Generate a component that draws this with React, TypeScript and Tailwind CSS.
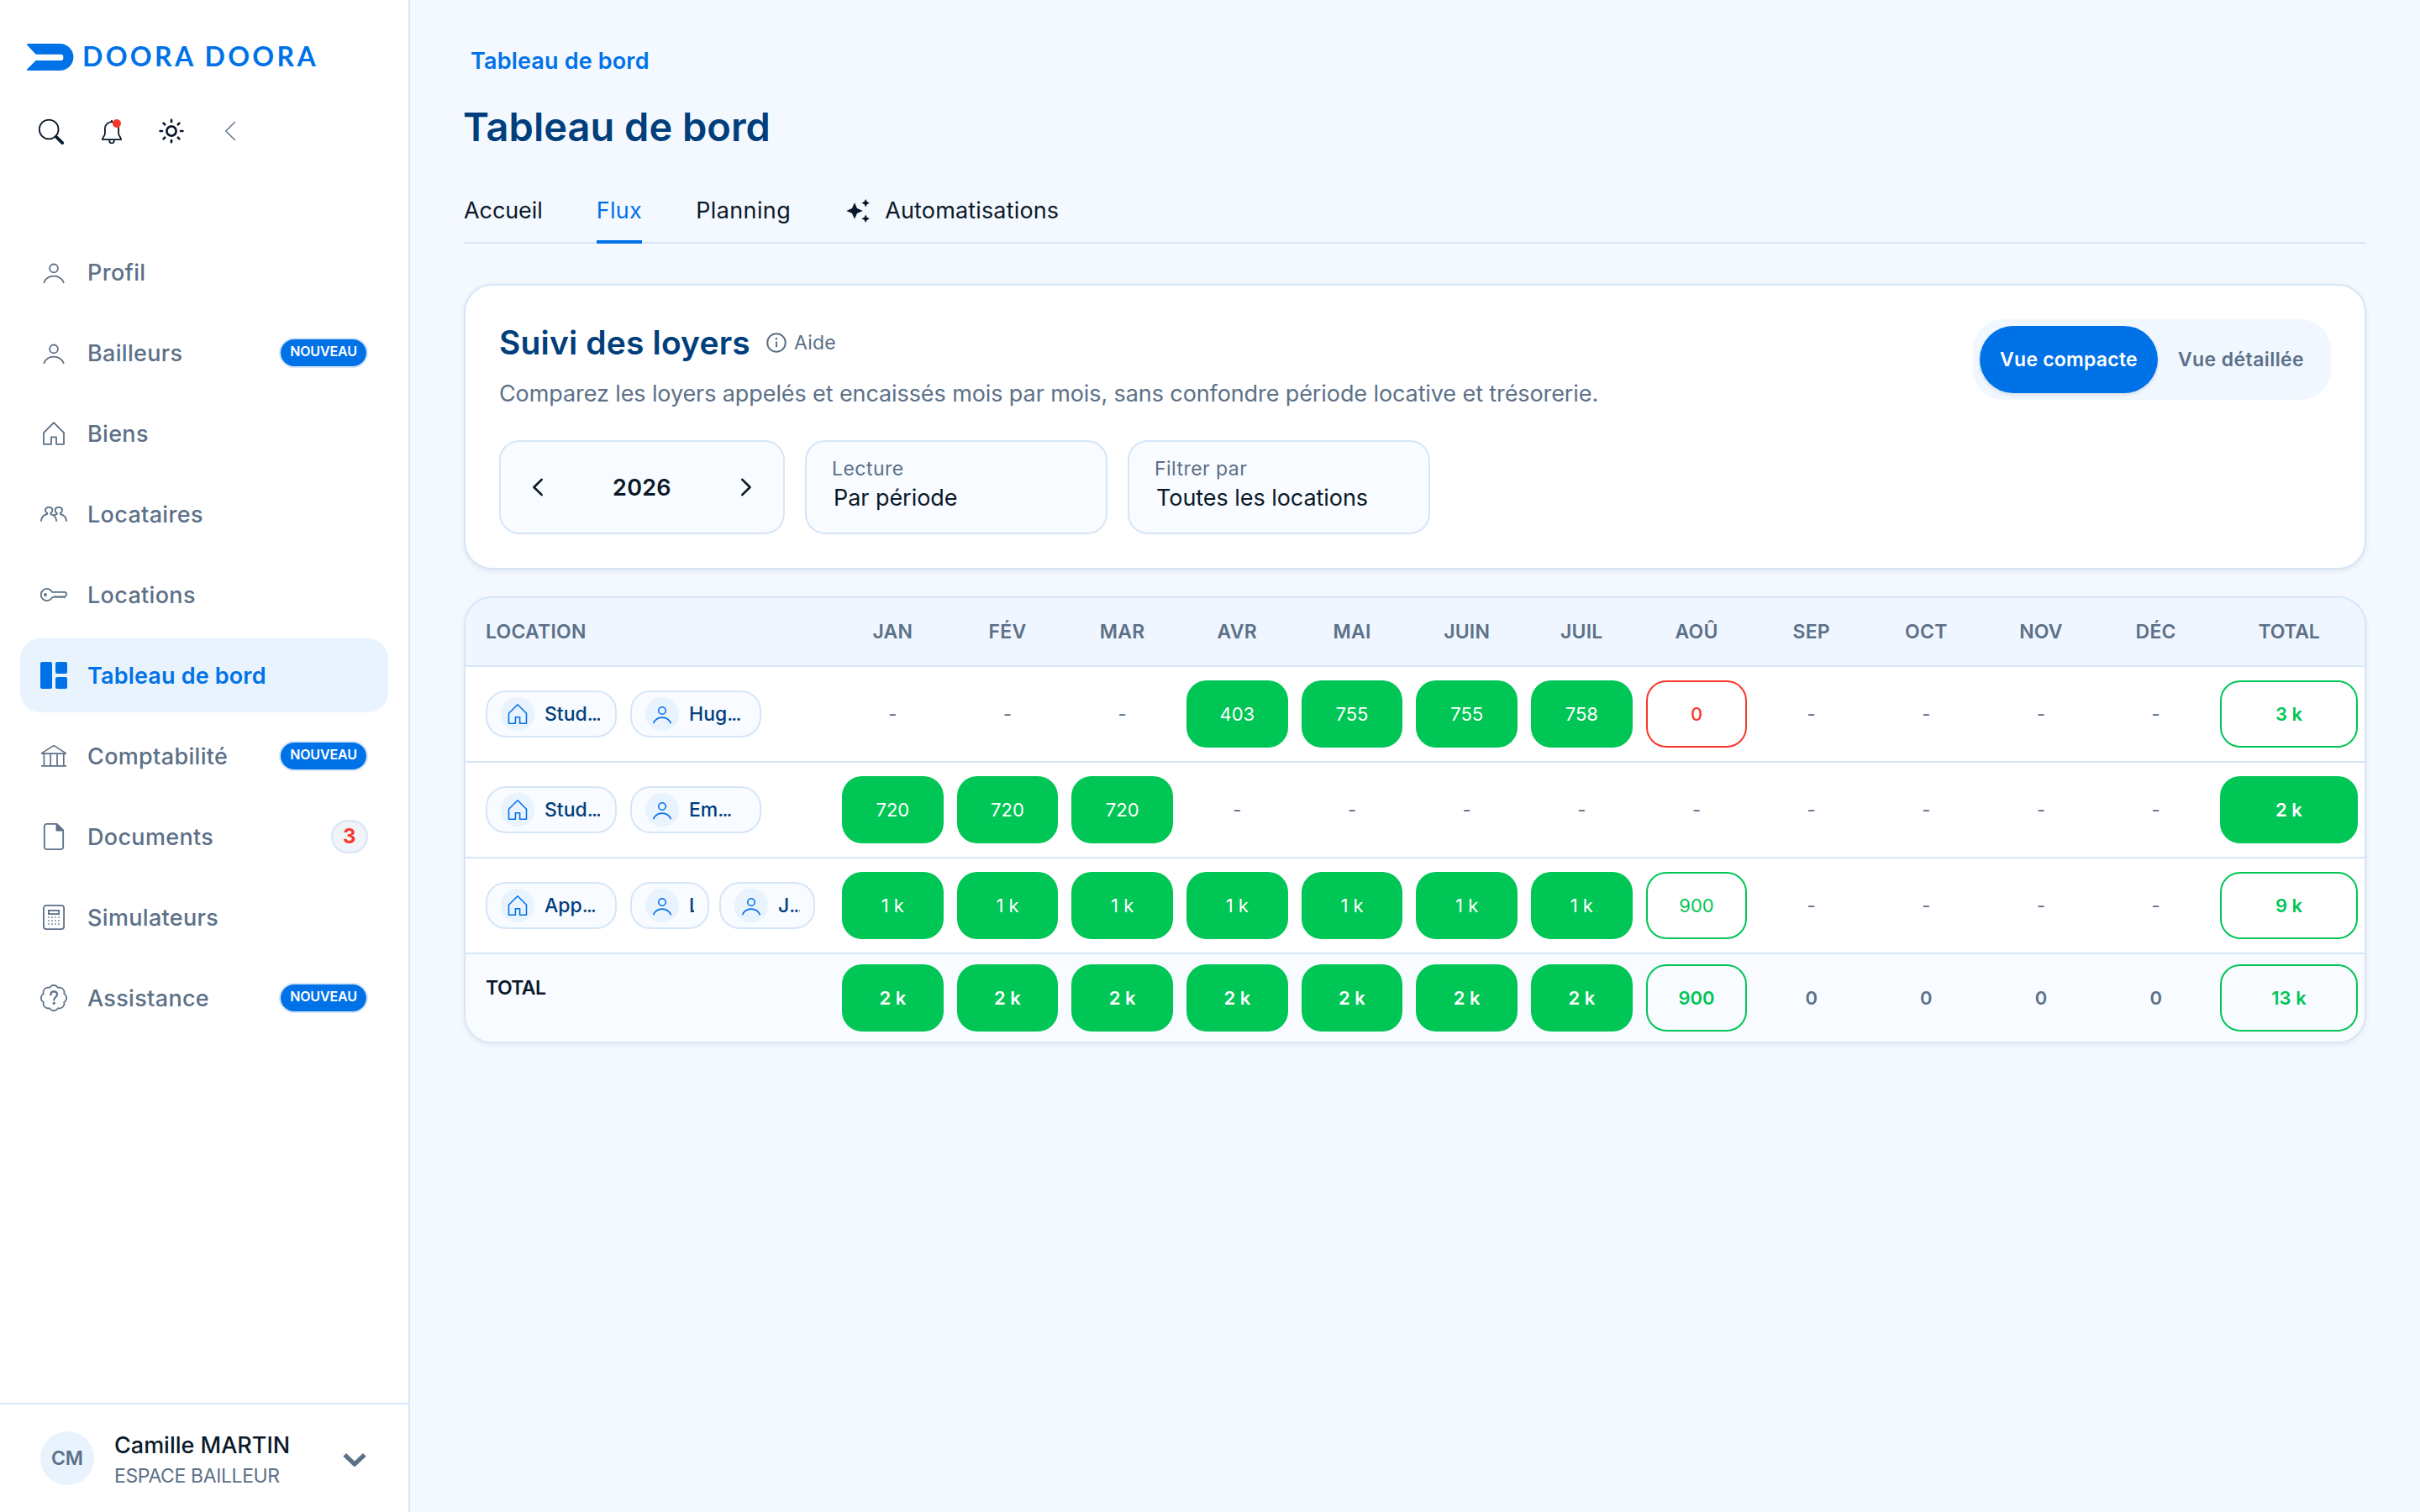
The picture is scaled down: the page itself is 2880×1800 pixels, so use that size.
import type { ReactNode } from "react";
import { clsx } from "clsx";

interface IconProps {
  className?: string;
}

interface NavItem {
  label: string;
  icon: (props: IconProps) => ReactNode;
  badge?: string;
  count?: number;
  active?: boolean;
}

type Tone = "full" | "partial" | "late" | "none";

interface Cell {
  value: string;
  tone: Tone;
}

interface Tenant {
  name: string;
  width: string;
}

interface Row {
  property: string;
  tenants: Tenant[];
  months: Cell[];
  total: Cell;
}

/* ---------- icons ---------- */

function UserIcon({ className }: IconProps) {
  return (
    <svg viewBox="0 0 32 32" className={className} fill="none" stroke="currentColor" strokeWidth="1.8">
      <circle cx="16" cy="11.4" r="4.9" />
      <path d="M4.1 28.8A12.8 12.8 0 0 1 27.9 28.8" />
    </svg>
  );
}

function HomeIcon({ className }: IconProps) {
  return (
    <svg viewBox="0 0 32 32" className={className} fill="none" stroke="currentColor" strokeWidth="1.8" strokeLinejoin="round">
      <path d="M16 3.2 28 15.2V28.8H19V20.3H13V28.8H4V15.2Z" />
    </svg>
  );
}

function UsersIcon({ className }: IconProps) {
  return (
    <svg viewBox="0 0 32 32" className={className} fill="none" stroke="currentColor" strokeWidth="1.9" strokeLinejoin="round">
      <path d="M.9 24.8C1.2 20 3.6 17 8.1 16.1V14.9C6.6 14.1 6 12.9 6 11.6 6 9.4 7.8 7.9 10.2 7.9S14.4 9.4 14.4 11.6C14.4 12.9 13.8 14.1 12.3 14.9V16.1C16.6 17 19 20 19.3 24.8" />
      <path d="M15.8 17.9C16.9 17 18.2 16.4 19.7 16.1V14.9C18.2 14.1 17.6 12.9 17.6 11.6 17.6 9.4 19.4 7.9 21.8 7.9S26 9.4 26 11.6C26 12.9 25.4 14.1 23.9 14.9V16.1C28.3 17 30.8 20 31.1 24.8" />
    </svg>
  );
}

function KeyIcon({ className }: IconProps) {
  return (
    <svg viewBox="0 0 32 32" className={className} fill="none" stroke="currentColor" strokeWidth="1.8" strokeLinejoin="round">
      <path d="M14.2 12.9A7.1 7.1 0 1 0 14.2 19.1H16L17.4 17.9 19 19.2 20.8 17.9 22.4 19.2 24.2 17.9 25.8 19.2 27.4 18 28.8 19.2 31.1 16.2C31.1 14.6 30.4 12.9 29 12.9Z" />
      <circle cx="6" cy="16" r="1.9" fill="currentColor" stroke="none" />
    </svg>
  );
}

function DashboardIcon({ className }: IconProps) {
  return (
    <svg viewBox="0 0 32 32" className={className} fill="currentColor">
      <rect width="14" height="32" rx="2" />
      <rect x="18" width="14" height="14" rx="2" />
      <rect x="18" y="18" width="14" height="14" rx="2" />
    </svg>
  );
}

function BankIcon({ className }: IconProps) {
  return (
    <svg viewBox="0 0 32 32" className={className} fill="none" stroke="currentColor" strokeWidth="1.7">
      <path d="M1.8 12.6 14.6 4.4Q16 3.5 17.4 4.4L30.2 12.6M1 13.2H31M1 27.8H31M4.4 13.2V27.8M12.2 13.2V27.8M20 13.2V27.8M27.8 13.2V27.8" />
    </svg>
  );
}

function FileIcon({ className }: IconProps) {
  return (
    <svg viewBox="0 0 32 32" className={className} fill="none" stroke="currentColor" strokeWidth="1.8" strokeLinejoin="round">
      <path d="M19.6 .9H7.6A2.8 2.8 0 0 0 4.8 3.7V28.3A2.8 2.8 0 0 0 7.6 31.1H24.4A2.8 2.8 0 0 0 27.2 28.3V8.4Z" />
      <path d="M19.4 1.4V8.6H27Z" fill="currentColor" />
    </svg>
  );
}

function CalculatorIcon({ className }: IconProps) {
  return (
    <svg viewBox="0 0 32 32" className={className} fill="none" stroke="currentColor" strokeWidth="1.8">
      <rect x="3.9" y="1.9" width="24.2" height="28.2" rx="3.2" />
      <rect x="9.9" y="7.9" width="12.2" height="4.2" />
      <path d="M9 16H24M9 20H24M9 24H24" strokeDasharray="2 2" opacity="0.6" />
    </svg>
  );
}

function HelpBadgeIcon({ className }: IconProps) {
  return (
    <svg viewBox="0 0 32 32" className={className} fill="none" stroke="currentColor" strokeWidth="1.7" strokeLinejoin="round" strokeLinecap="round">
      <path d="M28.2 10.95A5.75 5.75 0 0 1 28.2 21.05 5.75 5.75 0 0 1 21.05 28.2 5.75 5.75 0 0 1 10.95 28.2 5.75 5.75 0 0 1 3.8 21.05 5.75 5.75 0 0 1 3.8 10.95 5.75 5.75 0 0 1 10.95 3.8 5.75 5.75 0 0 1 21.05 3.8 5.75 5.75 0 0 1 28.2 10.95Z" />
      <path d="M12.4 12.4C12.4 10 14 8.4 16.2 8.4S20 9.9 20 12C20 14.9 16.2 15.2 16.2 18.4" strokeWidth="2.2" />
      <circle cx="16.2" cy="22.3" r="1.6" fill="currentColor" stroke="none" />
    </svg>
  );
}

function SearchIcon({ className }: IconProps) {
  return (
    <svg viewBox="0 0 32 32" className={className} fill="none" stroke="currentColor">
      <circle cx="13.2" cy="14" r="11.4" strokeWidth="1.8" />
      <path d="M20.8 21.4 22.6 23.2" strokeWidth="2" />
      <path d="M22.6 23.6 29.2 30.2" strokeWidth="3.8" strokeLinecap="round" />
    </svg>
  );
}

function BellIcon({ className }: IconProps) {
  return (
    <svg viewBox="0 0 32 32" className={className} fill="none" stroke="currentColor" strokeWidth="1.8" strokeLinejoin="round">
      <path d="M16 3V5.4M16 5.2C11 5.2 7.9 8.8 7.9 13.2V19.2C7.9 21.6 4.9 23 4.9 26.2H27.1C27.1 23 24.1 21.6 24.1 19.2V13.2C24.1 8.8 21 5.2 16 5.2Z" />
      <path d="M13.1 26.4C13.1 29 14.2 30.4 16 30.4S18.9 29 18.9 26.4" />
    </svg>
  );
}

function SunIcon({ className }: IconProps) {
  return (
    <svg viewBox="0 0 32 32" className={className} fill="none" stroke="currentColor" strokeWidth="2.7" strokeLinecap="round">
      <circle cx="16" cy="16" r="5.6" />
      <path d="M16 2.8V5M16 27V29.2M2.6 16H5M27 16H29.4M6.6 6.6 8.2 8.2M23.8 23.8 25.4 25.4M6.6 25.4 8.2 23.8M23.8 8.2 25.4 6.6" />
    </svg>
  );
}

function ChevronIcon({ className, width = 1.6 }: IconProps & { width?: number }) {
  return (
    <svg viewBox="0 0 32 32" className={className} fill="none" stroke="currentColor" strokeWidth={width} strokeLinecap="round" strokeLinejoin="round">
      <path d="M21.4 5.6 10.8 16 21.4 26.4" />
    </svg>
  );
}

function SparklesIcon({ className }: IconProps) {
  return (
    <svg viewBox="0 0 28 28" className={className} fill="currentColor">
      <path d="M10 4.2 13 11 19.8 14 13 17 10 23.8 7 17 .2 14 7 11Z" />
      <path d="M23.2 0 24.8 3.1 27.9 4.7 24.8 6.3 23.2 9.4 21.6 6.3 18.5 4.7 21.6 3.1Z" />
      <path d="M23.2 18.6 24.8 21.7 27.9 23.3 24.8 24.9 23.2 28 21.6 24.9 18.5 23.3 21.6 21.7Z" />
    </svg>
  );
}

function InfoIcon({ className }: IconProps) {
  return (
    <svg viewBox="0 0 24 24" className={className} fill="none" stroke="currentColor" strokeWidth="2">
      <circle cx="12" cy="12" r="10.8" />
      <path d="M12 10.6V17.2" />
      <circle cx="12" cy="7.2" r="1.3" fill="currentColor" stroke="none" />
    </svg>
  );
}

function LogoMark({ className }: IconProps) {
  return (
    <svg viewBox="0 0 56 32" className={className} fill="currentColor">
      <path d="M1 0H39.4A16 16 0 0 1 39.4 32H1C0 32-.3 31 .4 30.3L10.7 20H40.5A2.8 2.8 0 0 0 43.3 17.2V15.5A2.8 2.8 0 0 0 40.5 12.7H10.7L.4 1.7C-.3 1 0 0 1 0Z" />
    </svg>
  );
}

/* ---------- data ---------- */

const NAV: NavItem[] = [
  { label: "Profil", icon: UserIcon },
  { label: "Bailleurs", icon: UserIcon, badge: "NOUVEAU" },
  { label: "Biens", icon: HomeIcon },
  { label: "Locataires", icon: UsersIcon },
  { label: "Locations", icon: KeyIcon },
  { label: "Tableau de bord", icon: DashboardIcon, active: true },
  { label: "Comptabilité", icon: BankIcon, badge: "NOUVEAU" },
  { label: "Documents", icon: FileIcon, count: 3 },
  { label: "Simulateurs", icon: CalculatorIcon },
  { label: "Assistance", icon: HelpBadgeIcon, badge: "NOUVEAU" },
];

const MONTHS = ["JAN", "FÉV", "MAR", "AVR", "MAI", "JUIN", "JUIL", "AOÛ", "SEP", "OCT", "NOV", "DÉC"];

const full = (value: string): Cell => ({ value, tone: "full" });
const partial = (value: string): Cell => ({ value, tone: "partial" });
const late = (value: string): Cell => ({ value, tone: "late" });
const none = (value = "-"): Cell => ({ value, tone: "none" });
const repeat = (cell: Cell, n: number): Cell[] => Array.from({ length: n }, () => cell);

const ROWS: Row[] = [
  {
    property: "Stud...",
    tenants: [{ name: "Hug...", width: "w-[156px]" }],
    months: [...repeat(none(), 3), full("403"), full("755"), full("755"), full("758"), late("0"), ...repeat(none(), 4)],
    total: partial("3 k"),
  },
  {
    property: "Stud...",
    tenants: [{ name: "Em...", width: "w-[156px]" }],
    months: [...repeat(full("720"), 3), ...repeat(none(), 9)],
    total: full("2 k"),
  },
  {
    property: "App...",
    tenants: [
      { name: "L", width: "w-[94px]" },
      { name: "J...", width: "w-[114px]" },
    ],
    months: [...repeat(full("1 k"), 7), partial("900"), ...repeat(none(), 4)],
    total: partial("9 k"),
  },
];

const TOTALS: Cell[] = [...repeat(full("2 k"), 7), partial("900"), ...repeat(none("0"), 4)];

const GRID = "grid grid-cols-[440px_repeat(12,minmax(0,1fr))_180px]";

/* ---------- sidebar ---------- */

function Sidebar() {
  return (
    <aside className="flex w-[488px] shrink-0 flex-col border-r-2 border-[#d6e6f7] bg-white">
      <div className="mt-[52px] flex h-8 items-center pl-8 text-[#0072e8]">
        <LogoMark className="h-8 w-14" />
        <span className="ml-[10px] pb-[2px] font-['Lato'] text-[32px] leading-[30px] font-bold tracking-[0.104em]">DOORA DOORA</span>
      </div>

      <div className="mt-10 flex h-16 pl-[25px] text-[#0a1929]">
        <button className="flex w-[72px] items-center justify-center">
          <SearchIcon className="size-8" />
        </button>
        <button className="relative flex w-[72px] items-center justify-center">
          <BellIcon className="size-8" />
          <span className="absolute top-[18px] right-[25px] size-[10px] rounded-full bg-[#f8372b]" />
        </button>
        <button className="flex w-[70px] items-center justify-center">
          <SunIcon className="size-8" />
        </button>
        <button className="flex w-[70px] items-center justify-center text-[#5c7088]">
          <ChevronIcon className="size-8" width={1.4} />
        </button>
      </div>

      <nav className="mt-[92px] flex flex-col gap-2 px-6">
        {NAV.map((item) => (
          <a
            key={item.label}
            className={clsx(
              "flex h-[88px] items-center gap-6 rounded-3xl px-6 text-[27px]",
              item.active ? "bg-[#e8f3fe] font-semibold tracking-[0.006em] text-[#0072e8]" : "font-[450] tracking-[0.012em] text-[#5c7088]"
            )}
          >
            <item.icon className="size-8" />
            <span className="flex-1 pt-[2px]">{item.label}</span>
            {item.badge && (
              <span className="flex h-9 w-[106px] items-center justify-center rounded-full border-2 border-[#d6e6f7] bg-[#0072e8] pb-[4px] text-base leading-7 font-semibold tracking-[-0.01em] text-white">
                {item.badge}
              </span>
            )}
            {item.count && (
              <span className="flex h-10 w-11 items-center justify-center rounded-full border-2 border-[#d6e6f7] bg-[#f0f3f8] text-2xl font-bold text-[#f8372b]">
                {item.count}
              </span>
            )}
          </a>
        ))}
      </nav>

      <div className="mt-auto flex h-[130px] items-start border-t-2 border-[#d6e6f7] px-12 pt-7">
        <div className="mt-1 flex size-16 items-center justify-center rounded-full bg-[#e8f3fe] text-[23px] font-semibold text-[#5c7088]">
          CM
        </div>
        <div className="ml-6 flex-1 pt-px">
          <div className="text-[27px] leading-10 font-medium text-[#0a1929]">Camille MARTIN</div>
          <div className="text-[23px] leading-8 tracking-[-0.017em] text-[#5c7088]">ESPACE BAILLEUR</div>
        </div>
        <svg viewBox="0 0 32 32" className="mt-[22px] size-8 text-[#5c7088]" fill="none" stroke="currentColor" strokeWidth="5.2" strokeLinejoin="round">
          <path d="M4.2 9.8 16 21.2 27.8 9.8" />
        </svg>
      </div>
    </aside>
  );
}

/* ---------- rent table ---------- */

function Value({ cell, bold }: { cell: Cell; bold?: boolean }) {
  return (
    <div className="px-2">
      <div
        className={clsx(
          "flex h-20 items-center justify-center rounded-3xl text-[22px]",
          bold ? "font-semibold" : "font-[370]",
          cell.tone === "full" && "bg-[#00c655] text-white",
          cell.tone === "partial" && "border-2 border-[#00c655] text-[#00c655]",
          cell.tone === "late" && "border-2 border-[#f8372b] font-medium text-[#f8372b]",
          cell.tone === "none" && "text-[#5c7088]"
        )}
      >
        {cell.value}
      </div>
    </div>
  );
}

function Chip({ icon: Icon, label, width }: { icon: NavItem["icon"]; label: string; width: string }) {
  return (
    <div className={clsx("flex h-14 shrink-0 items-center rounded-3xl border-2 border-[#d6e6f7] bg-[#f8fbff] px-4", width)}>
      <span className="flex size-10 shrink-0 items-center justify-center rounded-full bg-[#e8f3fe] text-[#0072e8]">
        <Icon className="size-7" />
      </span>
      <span className="ml-3 min-w-0 overflow-hidden text-[23px] leading-8 font-medium whitespace-nowrap text-[#003e7c]">
        {label.replace("...", "")}
        {label.endsWith("...") && <span className="tracking-[-0.08em]">...</span>}
      </span>
    </div>
  );
}

function RentTable() {
  return (
    <section className="mt-8 overflow-hidden rounded-[34px] border-2 border-[#d6e6f7] bg-white shadow-[0_2px_6px_rgba(10,25,41,0.08)]">
      <div className={clsx(GRID, "h-[82px] items-center border-b-2 border-[#d6e6f7] bg-[#eff6ff] text-[23px] font-[560] tracking-[0.01em] text-[#5c7088]")}>
        <div className="pl-6">LOCATION</div>
        {MONTHS.map((month) => (
          <div key={month} className="text-center">
            {month}
          </div>
        ))}
        <div className="text-center tracking-[-0.01em]">TOTAL</div>
      </div>

      {ROWS.map((row, i) => (
        <div key={i} className={clsx(GRID, "h-[114px] items-center border-b-2 border-[#d6e6f7]")}>
          <div className="flex items-center gap-4 pl-6">
            <Chip icon={HomeIcon} label={row.property} width="w-[156px]" />
            <div className="flex gap-3">
              {row.tenants.map((tenant) => (
                <Chip key={tenant.name} icon={UserIcon} label={tenant.name} width={tenant.width} />
              ))}
            </div>
          </div>
          {row.months.map((cell, m) => (
            <Value key={m} cell={cell} />
          ))}
          <Value cell={row.total} bold />
        </div>
      ))}

      <div className={clsx(GRID, "h-[104px] bg-[#f8fbff] pt-3")}>
        <div className="pt-3 pl-6 text-[23px] leading-8 font-semibold tracking-[-0.025em] text-[#0a1929]">TOTAL</div>
        {TOTALS.map((cell, m) => (
          <Value key={m} cell={cell} bold />
        ))}
        <Value cell={partial("13 k")} bold />
      </div>
    </section>
  );
}

/* ---------- filters ---------- */

function SelectBox({ label, value }: { label: string; value: string }) {
  return (
    <div className="h-28 w-[360px] rounded-3xl border-2 border-[#d6e6f7] bg-[#f8fbff] px-[30px] pt-4">
      <div className="text-[23px] leading-8 tracking-[0.02em] text-[#5c7088]">{label}</div>
      <div className="pl-[2px] text-[27px] leading-[38px] tracking-[-0.002em] text-[#0a1929]">{value}</div>
    </div>
  );
}

function FilterCard() {
  return (
    <section className="mt-12 flex items-start justify-between rounded-[34px] border-2 border-[#d6e6f7] bg-white p-10 shadow-[0_2px_6px_rgba(10,25,41,0.08)]">
      <div>
        <div className="flex h-14 items-center">
          <h2 className="text-[39px] font-semibold tracking-[0.004em] text-[#003e7c]">Suivi des loyers</h2>
          <button className="ml-[19px] flex items-center gap-[9px] text-[23px] tracking-[0.01em] text-[#5c7088]">
            <InfoIcon className="size-6" />
            Aide
          </button>
        </div>
        <p className="mt-[13px] text-[27px] leading-10 tracking-[-0.0037em] text-[#5c7088]">
          Comparez les loyers appelés et encaissés mois par mois, sans confondre période locative et trésorerie.
        </p>
        <div className="mt-[35px] flex gap-6">
          <div className="flex h-28 w-[340px] items-center justify-between rounded-3xl border-2 border-[#d6e6f7] bg-[#f8fbff] px-[30px] text-[#0a1929]">
            <ChevronIcon className="size-7" width={3} />
            <span className="pt-[2px] text-[27px] font-semibold tracking-[0.01em]">2026</span>
            <ChevronIcon className="size-7 rotate-180" width={3} />
          </div>
          <SelectBox label="Lecture" value="Par période" />
          <SelectBox label="Filtrer par" value="Toutes les locations" />
        </div>
      </div>

      <div className="flex h-24 items-center rounded-[36px] bg-[#f0f7ff] p-2 text-[23px]">
        <button className="h-20 w-[212px] rounded-full bg-[#0072e8] font-semibold tracking-[0.01em] text-white shadow-[0_2px_4px_rgba(10,25,41,0.12)]">
          Vue compacte
        </button>
        <button className="h-20 w-[198px] font-[560] tracking-[0.018em] text-[#5c7088]">Vue détaillée</button>
      </div>
    </section>
  );
}

function Tabs() {
  const tab = "-mb-[2px] flex items-center border-b-4 pb-[15px] leading-10";
  return (
    <nav className="mt-[50px] flex gap-16 border-b-2 border-[#d6e6f7] text-[27px] text-[#0a1929]">
      <a className={clsx(tab, "border-transparent tracking-[-0.003em]")}>Accueil</a>
      <a className={clsx(tab, "border-[#0072e8] tracking-[0.012em] text-[#0072e8]")}>Flux</a>
      <a className={clsx(tab, "border-transparent tracking-[0.014em]")}>Planning</a>
      <a className={clsx(tab, "border-transparent tracking-[0.006em]")}>
        <SparklesIcon className="mr-[18px] ml-[2px] size-7" />
        Automatisations
      </a>
    </nav>
  );
}

export default function App() {
  return (
    <div className="flex h-[1800px] w-[2880px] overflow-hidden bg-[#f4f8ff] font-['Inter',sans-serif]">
      <Sidebar />
      <main className="flex-1 px-16 pt-[53px]">
        <div className="pl-2 text-[27px] leading-10 font-semibold tracking-[0.006em] text-[#0072e8]">Tableau de bord</div>
        <h1 className="-ml-px mt-7 text-[47px] leading-[60px] font-semibold text-[#003e7c]">Tableau de bord</h1>
        <Tabs />
        <FilterCard />
        <RentTable />
      </main>
    </div>
  );
}
